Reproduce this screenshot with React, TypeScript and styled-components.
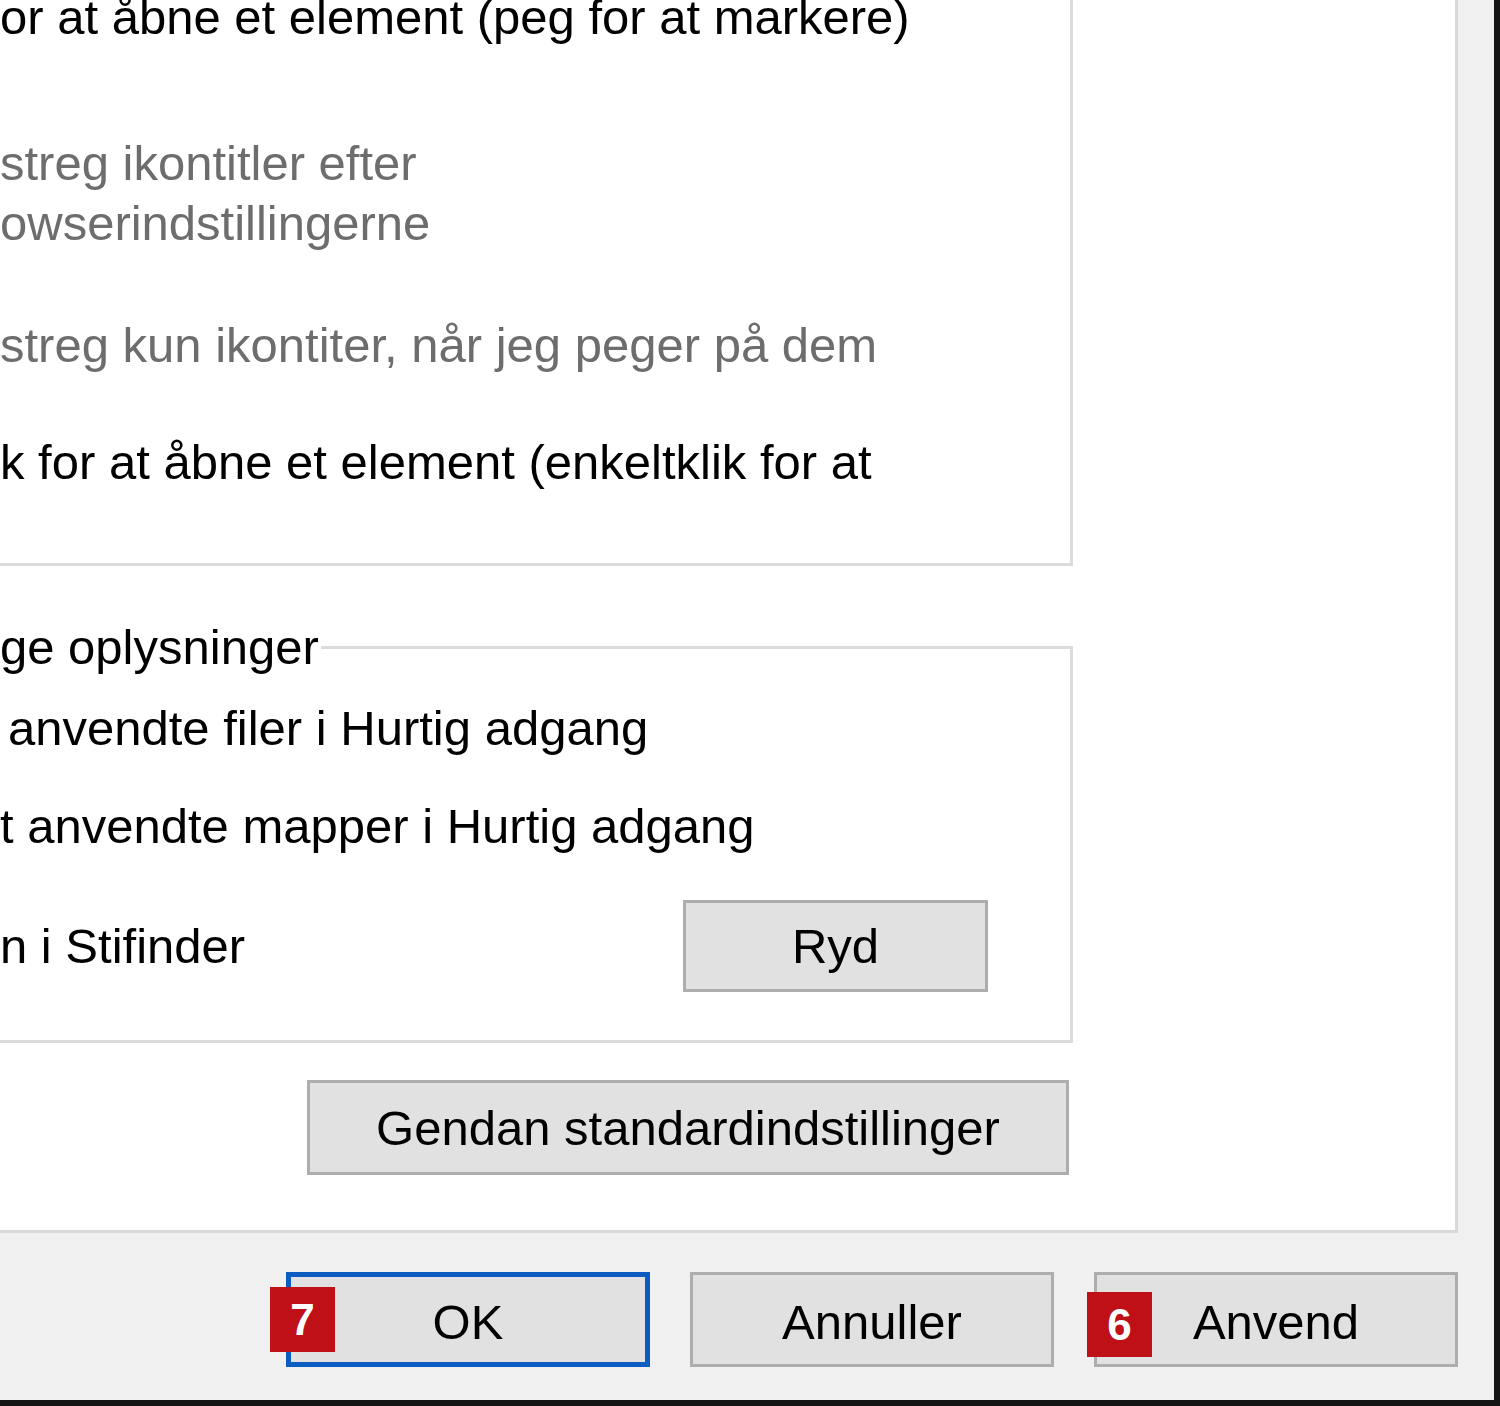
import React from 'react';
import styled, { createGlobalStyle } from 'styled-components';

const Global = createGlobalStyle`
  html, body { margin: 0; padding: 0; background: #f0f0f0; }
  body { font-family: "Liberation Sans", Arial, sans-serif; }
  *, *::before, *::after { box-sizing: border-box; }
`;

const Window = styled.div`
  width: 1500px;
  height: 1406px;
  overflow: hidden;
  background: #f0f0f0;
  border-right: 6px solid #141414;
  border-bottom: 6px solid #141414;
  display: flex;
  flex-direction: column;
  font-family: "Liberation Sans", Arial, sans-serif;
  font-size: 49px;
  line-height: 60px;
  color: #000;
`;

const TabPanel = styled.section`
  flex: none;
  width: 1458px;
  height: 1233px;
  background: #fff;
  border-right: 3px solid #d9d9d9;
  border-bottom: 3px solid #d9d9d9;
  overflow: hidden;
`;

const Content = styled.div`
  width: 1073px;
  display: flex;
  flex-direction: column;
`;

const BehaviourGroup = styled.div`
  margin-top: -13px;
  padding-bottom: 71px;
  border-right: 3px solid #dcdcdc;
  border-bottom: 3px solid #dcdcdc;
  display: flex;
  flex-direction: column;
`;

const PrivacyGroup = styled.fieldset`
  margin: 51px 0 0;
  padding: 0 0 48px;
  min-width: 0;
  border: 3px solid #dcdcdc;
  border-left: none;
  display: flex;
  flex-direction: column;
`;

const Legend = styled.legend`
  margin: 0;
  padding: 0 2px 0 0;
  line-height: 60px;
  white-space: nowrap;
`;

const Line = styled.div<{ $muted?: boolean; $gap?: number; $indent?: number }>`
  margin-top: ${p => p.$gap ?? 0}px;
  padding-left: ${p => p.$indent ?? 0}px;
  color: ${p => (p.$muted ? '#6d6d6d' : '#000')};
  white-space: nowrap;
  line-height: 60px;
`;

const ClearRow = styled.div`
  margin-top: 44px;
  padding-right: 82px;
  display: flex;
  align-items: center;
  justify-content: space-between;
`;

const PushButton = styled.button<{ $w: number; $h: number }>`
  flex: none;
  width: ${p => p.$w}px;
  height: ${p => p.$h}px;
  padding: 0;
  font: inherit;
  line-height: 60px;
  color: #000;
  background: #e1e1e1;
  border: 3px solid #adadad;
  border-radius: 0;
`;

const RestoreButton = styled(PushButton)`
  margin-top: 37px;
  margin-right: 4px;
  align-self: flex-end;
`;

const Footer = styled.div`
  flex: 1;
  display: flex;
  justify-content: flex-end;
  align-items: flex-start;
  gap: 40px;
  padding: 39px 36px 0 0;
`;

const DialogButton = styled.button<{ $focused?: boolean }>`
  position: relative;
  flex: none;
  width: 364px;
  height: 95px;
  padding: 5px 0 0;
  font: inherit;
  line-height: 60px;
  color: #000;
  background: #e1e1e1;
  border: ${p => (p.$focused ? '5px solid #0b5cc0' : '3px solid #adadad')};
  border-radius: 0;
`;

const Badge = styled.span<{ $left: number; $top: number }>`
  position: absolute;
  left: ${p => p.$left}px;
  top: ${p => p.$top}px;
  width: 65px;
  height: 65px;
  background: #bf1017;
  color: #fff;
  font-family: "Liberation Sans", Arial, sans-serif;
  font-weight: bold;
  font-size: 44px;
  line-height: 65px;
  text-align: center;
`;

export default function App() {
  return (
    <>
      <Global />
      <Window>
        <TabPanel>
          <Content>
            <BehaviourGroup>
              <Line>or at åbne et element (peg for at markere)</Line>
              <Line $muted $gap={86}>
                streg ikontitler efter
                <br />
                owserindstillingerne
              </Line>
              <Line $muted $gap={62}>streg kun ikontiter, når jeg peger på dem</Line>
              <Line $gap={57}>k for at åbne et element (enkeltklik for at</Line>
            </BehaviourGroup>

            <PrivacyGroup>
              <Legend>ge oplysninger</Legend>
              <Line $gap={21} $indent={8}>anvendte filer i Hurtig adgang</Line>
              <Line $gap={38}>t anvendte mapper i Hurtig adgang</Line>
              <ClearRow>
                <Line>n i Stifinder</Line>
                <PushButton $w={305} $h={92}>Ryd</PushButton>
              </ClearRow>
            </PrivacyGroup>

            <RestoreButton $w={762} $h={95}>Gendan standardindstillinger</RestoreButton>
          </Content>
        </TabPanel>

        <Footer>
          <DialogButton $focused>
            <Badge $left={-21} $top={10}>7</Badge>
            OK
          </DialogButton>
          <DialogButton>Annuller</DialogButton>
          <DialogButton>
            <Badge $left={-10} $top={17}>6</Badge>
            Anvend
          </DialogButton>
        </Footer>
      </Window>
    </>
  );
}
